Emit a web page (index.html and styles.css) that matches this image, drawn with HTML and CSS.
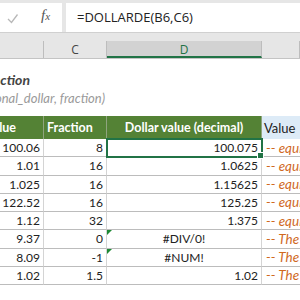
FILE: index.html
```html
<!DOCTYPE html>
<html lang="en">
<head>
    <meta charset="UTF-8" />
    <title>DOLLARDE function</title>
    <link rel="stylesheet" href="styles.css">
</head>
<body>
    <div class="formula-bar">
        <div class="fx-box">
            <svg class="check" width="12" height="12" viewBox="0 0 12 12">
                <polyline points="1,6 4.5,9.5 10.5,1.5" fill="none" stroke="#b8b8b8" stroke-width="1.3" />
            </svg>
            <span class="fx"><i>f</i><small>x</small></span>
        </div>
        <div class="formula">=DOLLARDE(B6,C6)</div>
    </div>

    <div class="col-heads">
        <div class="ch"></div>
        <div class="ch">C</div>
        <div class="ch active">D</div>
        <div class="ch"></div>
    </div>

    <div class="sheet">
        <div class="titles">
            <div class="title"><span>Excel DOLLARDE function</span></div>
            <div class="subtitle"><span>=DOLLARDE(fractional_dollar, fraction)</span></div>
        </div>

        <div class="grid">
            <div class="hd hd-b"><span>Value</span></div>
            <div class="hd hd-c">Fraction</div>
            <div class="hd hd-d">Dollar value (decimal)</div>
            <div class="hd hd-e">Value</div>

            <div class="cell num">100.06</div>
            <div class="cell num">8</div>
            <div class="cell num selected">100.075</div>
            <div class="cell note">-- equivalent to 100 3/40</div>

            <div class="cell num">1.01</div>
            <div class="cell num">16</div>
            <div class="cell num">1.0625</div>
            <div class="cell note">-- equivalent to 1 1/16</div>

            <div class="cell num">1.025</div>
            <div class="cell num">16</div>
            <div class="cell num">1.15625</div>
            <div class="cell note">-- equivalent to 1 2.5/16</div>

            <div class="cell num">122.52</div>
            <div class="cell num">16</div>
            <div class="cell num">125.25</div>
            <div class="cell note">-- equivalent to 122 52/16</div>

            <div class="cell num">1.12</div>
            <div class="cell num">32</div>
            <div class="cell num">1.375</div>
            <div class="cell note">-- equivalent to 1 12/32</div>

            <div class="cell num">9.37</div>
            <div class="cell num">0</div>
            <div class="cell err flag">#DIV/0!</div>
            <div class="cell note">-- The fraction is zero</div>

            <div class="cell num">8.09</div>
            <div class="cell num">-1</div>
            <div class="cell err flag">#NUM!</div>
            <div class="cell note">-- The fraction is negative</div>

            <div class="cell num">1.02</div>
            <div class="cell num">1.5</div>
            <div class="cell num">1.02</div>
            <div class="cell note">-- The fraction is truncated</div>
        </div>
    </div>
</body>
</html>
```

FILE: styles.css
```css
body {
    margin: 0;
    width: 300px;
    height: 300px;
    overflow: hidden;
    background: white;
    font-family: Lato, "Open Sans", sans-serif;
}
.formula-bar {
    display: flex;
    gap: 4px;
    height: 33px;
    padding-top: 3px;
    box-sizing: border-box;
    background: #e6e6e6;
    border-bottom: 1px solid #d0d0d0;
}
.fx-box {
    width: 62px;
    height: 29px;
    background: white;
    display: flex;
    align-items: center;
}
.check {
    margin-left: 7px;
    margin-top: 3px;
}
.fx {
    margin-left: 22px;
    margin-top: -4px;
    color: #555;
    font-family: "Liberation Serif", serif;
    font-size: 15px;
}
.fx small {
    font-style: italic;
    font-size: 11px;
}
.formula {
    flex: 1;
    height: 29px;
    background: white;
    padding-left: 11px;
    font-family: "Open Sans", sans-serif;
    font-size: 13px;
    line-height: 29px;
    color: #222;
}
.col-heads {
    display: grid;
    grid-template-columns: 44px 63px 155px 1fr;
    background: #e6e6e6;
    padding-top: 8px;
    border-bottom: 1px solid #c4c4c4;
}
.ch {
    height: 17px;
    border-right: 1px solid #bdbdbd;
    text-align: center;
    font-family: "Open Sans", sans-serif;
    font-size: 12px;
    line-height: 18px;
    color: #444;
}
.ch.active {
    background: #d2d2d2;
    color: #217346;
    border-bottom: 2px solid #217346;
    height: 15px;
    margin-bottom: -1px;
}
.titles {
    height: 57px;
    padding-top: 12px;
    box-sizing: border-box;
}
.title,
.subtitle {
    display: flex;
    justify-content: flex-end;
    white-space: nowrap;
    font-style: italic;
}
.title {
    width: 30px;
    height: 19px;
    font-weight: bold;
    font-size: 14px;
    color: #444;
}
.subtitle {
    width: 105px;
    font-size: 13px;
    color: #9a9a9a;
}
.grid {
    display: grid;
    grid-template-columns: 44px 63px 155px 1fr;
    grid-template-rows: 23px repeat(8, 18.25px);
}
.hd {
    display: flex;
    align-items: center;
    background: #548235;
    color: white;
    font-weight: bold;
    font-size: 12.5px;
    white-space: nowrap;
    overflow: hidden;
    border-right: 1px solid #8fa47e;
}
.hd-b {
    justify-content: flex-end;
    padding-right: 27px;
}
.hd-b span {
    flex-shrink: 0;
}
.hd-c {
    padding-left: 3px;
}
.hd-d {
    justify-content: center;
}
.hd-e {
    background: #ddebf7;
    color: #222;
    font-weight: normal;
    font-size: 13px;
    padding-left: 2px;
    border-right: none;
}
.cell {
    position: relative;
    display: flex;
    align-items: center;
    white-space: nowrap;
    overflow: hidden;
    font-size: 12px;
    color: #222;
    border-right: 1px solid #d4d4d4;
    border-bottom: 1px solid #bcbcbc;
    box-sizing: border-box;
}
.num {
    justify-content: flex-end;
    padding-right: 3px;
}
.err {
    justify-content: center;
}
.note {
    color: #d0691f;
    font-style: italic;
    font-size: 13.5px;
    padding-left: 4px;
    border-right: none;
}
.selected {
    overflow: visible;
    outline: 2px solid #217346;
    outline-offset: -1px;
    z-index: 1;
}
.selected::after {
    content: "";
    position: absolute;
    right: -3px;
    bottom: -3px;
    width: 5px;
    height: 5px;
    background: #217346;
    border: 1px solid white;
}
.flag::before {
    content: "";
    position: absolute;
    left: 0;
    top: 0;
    border-top: 5px solid #1e8a35;
    border-right: 5px solid transparent;
}
```
